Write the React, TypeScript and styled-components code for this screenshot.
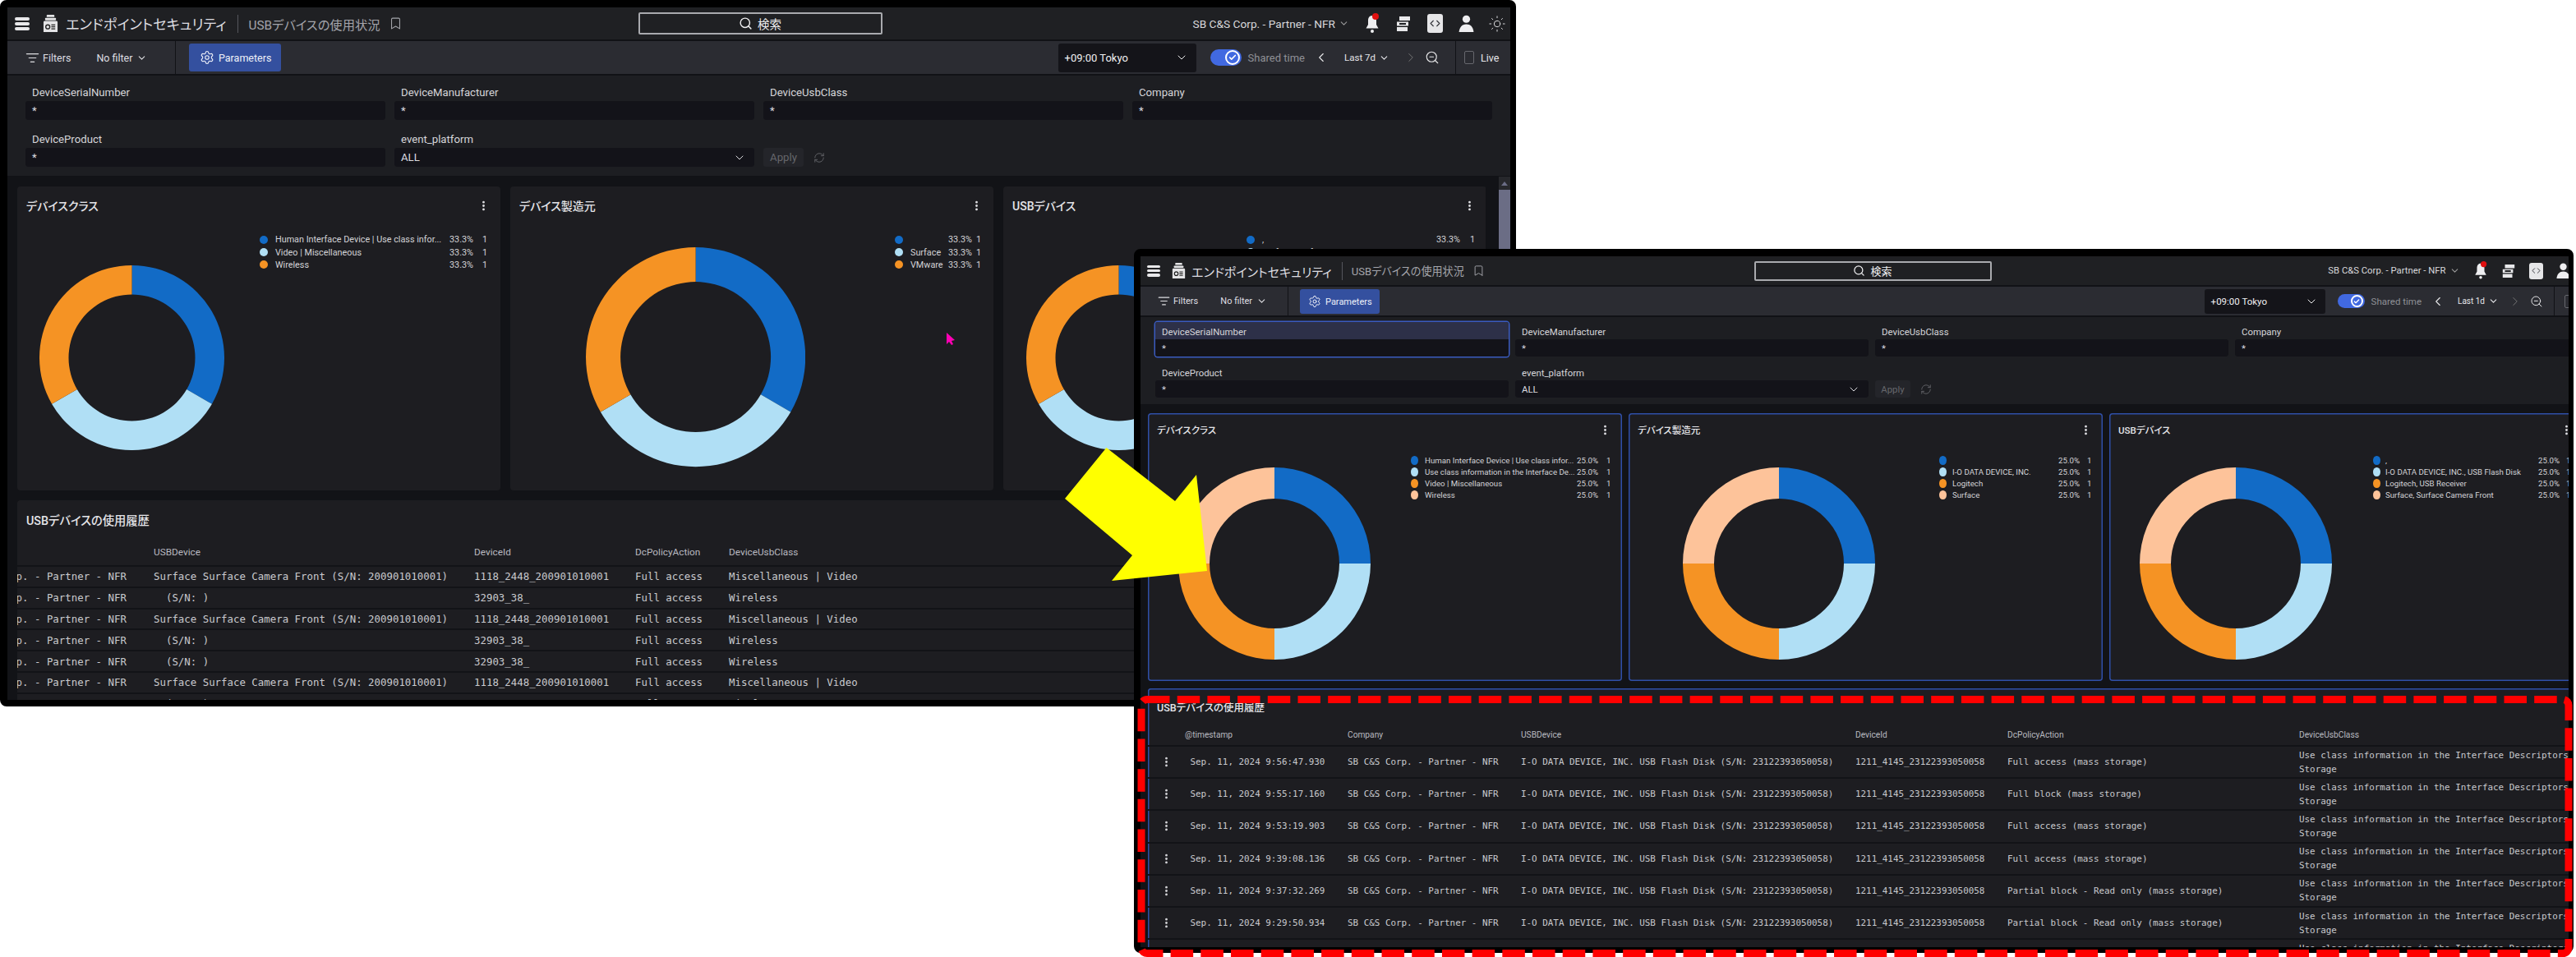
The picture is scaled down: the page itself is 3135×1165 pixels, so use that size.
import React from "react";
import styled, { createGlobalStyle, ThemeProvider } from "styled-components";
import {
  Bookmark,
  Check,
  ChevronDown,
  ChevronLeft,
  ChevronRight,
  Code,
  EllipsisVertical,
  ListFilter,
  RefreshCw,
  Search,
  Settings,
  Sun,
  ZoomOut,
} from "lucide-react";

const SANS = `Roboto, "Noto Sans CJK JP", sans-serif`;
const MONO = `"DejaVu Sans Mono", "Liberation Mono", monospace`;

const BLUE = "#126bc6";
const SKY = "#b0dff5";
const ORANGE = "#f59324";
const PEACH = "#fdc39a";

const large = {
  compact: false,
  left: 0,
  top: 0,
  width: 1845,
  height: 860,
  border: "9px 7px 8px 9px",
  bleed: 0,
  headerH: 41,
  toolbarH: 42,
  titleSize: 17.3,
  subtitleSize: 15.3,
  orgSize: 13.7,
  searchSize: 14.5,
  textSize: 12.5,
  labelSize: 13.2,
  cellSize: 12.4,
  headSize: 11.8,
  legendSize: 10.8,
  cardTitleSize: 14,
  tableTitleSize: 14.3,
  pad: 12,
  gap: 12,
  cardW: 588,
  cardH: 370,
  cardHeadH: 46,
  legendRowH: 15.4,
  accent: "transparent",
  tableTitleH: 47,
  headRowH: 34,
  paramsPad: "14px 21px 11px 22px",
  paramW: 438,
  paramGapX: 11,
  fieldLabelH: 17,
  fieldLabelPad: "0 0 5px 8px",
  fieldH: 23,
  rowGap: 17,
};

const small = {
  ...large,
  compact: true,
  left: 1380,
  top: 303,
  width: 1752,
  height: 857,
  border: "9px 6px 7px 8px",
  bleed: 44,
  headerH: 37,
  toolbarH: 37,
  titleSize: 15.1,
  subtitleSize: 13.1,
  orgSize: 11.3,
  searchSize: 13,
  textSize: 11,
  labelSize: 11.4,
  cellSize: 10.9,
  headSize: 10.2,
  legendSize: 9.7,
  cardTitleSize: 11.5,
  tableTitleSize: 12.5,
  pad: 9,
  gap: 8,
  cardW: 577,
  cardH: 326,
  cardHeadH: 40,
  legendRowH: 13.9,
  accent: "#2f4fa8",
  tableTitleH: 44,
  headRowH: 27,
  paramsPad: "6px 0 8px 18px",
  paramW: 430,
  paramGapX: 8,
  fieldLabelH: 21,
  fieldLabelPad: "3px 0 0 8px",
  fieldH: 21,
  rowGap: 8,
};

const GlobalStyle = createGlobalStyle`
  html, body {
    margin: 0;
    padding: 0;
    background: #fff;
    font-family: ${SANS};
  }
  * {
    box-sizing: border-box;
  }
`;

const Canvas = styled.div`
  position: relative;
  width: 3135px;
  height: 1165px;
  overflow: hidden;
  background: #fff;
  font-feature-settings: "palt";
`;

const Window = styled.section`
  position: absolute;
  left: ${(p) => p.theme.left}px;
  top: ${(p) => p.theme.top}px;
  width: ${(p) => p.theme.width}px;
  height: ${(p) => p.theme.height}px;
  display: flex;
  flex-direction: column;
  overflow: hidden;
  border-style: solid;
  border-color: #000;
  border-width: ${(p) => p.theme.border};
  border-radius: 8px;
  background: #121317;
  color: #e6e6ea;
`;

const Header = styled.header`
  flex: none;
  display: flex;
  align-items: center;
  height: ${(p) => p.theme.headerH}px;
  margin-right: -${(p) => p.theme.bleed}px;
  background: #1f2023;
  border-bottom: 2px solid #111216;
`;

const HeaderSide = styled.div`
  flex: 1 1 0;
  display: flex;
  align-items: center;
  min-width: 0;
`;

const HeaderRight = styled(HeaderSide)`
  justify-content: flex-end;
  white-space: nowrap;
  margin-right: ${(p) => (p.theme.compact ? 0 : -3)}px;
`;

const Burger = styled.div`
  flex: none;
  display: flex;
  flex-direction: column;
  justify-content: space-between;
  width: ${(p) => (p.theme.compact ? 16 : 18)}px;
  height: ${(p) => (p.theme.compact ? 14 : 16)}px;
  margin: ${(p) => (p.theme.compact ? "0 13.5px 0 8px" : "0 15.5px 0 9px")};

  span {
    height: ${(p) => (p.theme.compact ? 3.5 : 4)}px;
    border-radius: 2px;
    background: #e8e8ea;
  }
`;

const AppTitle = styled.h1`
  margin: 0 0 0 ${(p) => (p.theme.compact ? 7.5 : 9.5)}px;
  font-size: ${(p) => p.theme.titleSize}px;
  font-weight: 400;
  white-space: nowrap;
  color: #dcdce0;
`;

const HeaderRule = styled.span`
  flex: none;
  width: 1px;
  height: 22px;
  margin: ${(p) => (p.theme.compact ? "0 11px 0 12px" : "0 13px 0 13px")};
  background: #55565c;
`;

const PageTitle = styled.span`
  font-size: ${(p) => p.theme.subtitleSize}px;
  white-space: nowrap;
  color: #a4a5ab;
  margin-right: 10px;
`;

const SearchBox = styled.div`
  flex: none;
  display: flex;
  align-items: center;
  justify-content: center;
  gap: 6px;
  width: ${(p) => (p.theme.compact ? 289 : 297)}px;
  height: ${(p) => (p.theme.compact ? 24 : 27)}px;
  border: 2px solid #a9aaae;
  border-radius: 2px;
  font-size: ${(p) => p.theme.searchSize}px;
  color: #f0f0f2;
`;

const OrgName = styled.span`
  font-size: ${(p) => p.theme.orgSize}px;
  color: #d8d8dc;
`;

const OrgChevron = styled(ChevronDown)`
  flex: none;
  margin: 0 9px 0 4px;
  color: #999;
`;

const HeaderIcon = styled.span`
  flex: none;
  position: relative;
  display: inline-flex;
  align-items: center;
  justify-content: center;
  width: ${(p) => (p.theme.compact ? 33.5 : 38)}px;
  color: #e8e8ea;
`;

const CodeChip = styled.span`
  display: inline-flex;
  align-items: center;
  justify-content: center;
  width: ${(p) => (p.theme.compact ? 17 : 19)}px;
  height: ${(p) => (p.theme.compact ? 20 : 23)}px;
  border-radius: 3px;
  background: #e6e6e8;
  color: #33343a;
`;

const Toolbar = styled.div`
  flex: none;
  display: flex;
  align-items: stretch;
  height: ${(p) => p.theme.toolbarH}px;
  margin-right: -${(p) => p.theme.bleed}px;
  background: #2b2c32;
  border-bottom: 2px solid #111216;
  font-size: ${(p) => p.theme.textSize}px;
  white-space: nowrap;
`;

const FilterGroup = styled.div`
  flex: none;
  display: flex;
  align-items: center;
  width: ${(p) => (p.theme.compact ? 180 : 205)}px;
  padding-left: ${(p) => (p.theme.compact ? 21 : 22)}px;
  border-right: 1px solid #111216;
  color: #dedee2;
`;

const FilterText = styled.span`
  margin-left: 4px;
  margin-right: ${(p) => (p.theme.compact ? 27 : 31)}px;
`;

const FilterChevron = styled(ChevronDown)`
  flex: none;
  margin-left: 5px;
`;

const ParametersButton = styled.div`
  flex: none;
  display: flex;
  align-items: center;
  gap: 5px;
  width: ${(p) => (p.theme.compact ? 97 : 112)}px;
  margin: 3px 0 ${(p) => (p.theme.compact ? 2 : 3)}px ${(p) => (p.theme.compact ? 14 : 16)}px;
  padding-left: ${(p) => (p.theme.compact ? 10 : 13)}px;
  border-radius: 3px;
  background: #34509f;
  color: #eef0f8;
`;

const ToolbarEnd = styled.div`
  flex: 1;
  display: flex;
  align-items: center;
  justify-content: flex-end;
  min-width: 0;
`;

const ZoneSelect = styled.div`
  flex: none;
  display: flex;
  align-items: center;
  justify-content: space-between;
  width: ${(p) => (p.theme.compact ? 147 : 168)}px;
  height: calc(100% - 5px);
  padding: 0 ${(p) => (p.theme.compact ? 9 : 10)}px 0 8px;
  margin-right: ${(p) => (p.theme.compact ? 15 : 17)}px;
  border-radius: 3px;
  background: #141419;
  color: #f0f0f2;
  font-size: ${(p) => p.theme.textSize + 0.5}px;
`;

const Toggle = styled.span`
  flex: none;
  position: relative;
  width: ${(p) => (p.theme.compact ? 33 : 38)}px;
  height: ${(p) => (p.theme.compact ? 17 : 20)}px;
  margin-right: 8px;
  border-radius: 10px;
  background: #4169e1;
`;

const ToggleKnob = styled.span`
  position: absolute;
  top: 1px;
  right: 2px;
  bottom: 1px;
  aspect-ratio: 1;
  display: flex;
  align-items: center;
  justify-content: center;
  border: 2px solid #fff;
  border-radius: 50%;
  background: #4169e1;
  color: #fff;
`;

const Muted = styled.span`
  font-size: ${(p) => p.theme.textSize + 0.5}px;
  color: #8f9096;
`;

const RangeStep = styled.span`
  flex: none;
  display: inline-flex;
  justify-content: center;
  width: ${(p) => (p.$wide ? 40 : 26)}px;
  color: ${(p) => (p.$dim ? "#777" : "#e8e8ea")};
`;

const RangeLabel = styled.span`
  display: inline-flex;
  align-items: center;
  gap: 4px;
  width: ${(p) => (p.theme.compact ? 57 : 68)}px;
  margin-left: ${(p) => (p.theme.compact ? 4 : 8)}px;
  font-size: ${(p) => p.theme.textSize - 1}px;
`;

const LiveGroup = styled.div`
  flex: none;
  display: flex;
  align-items: center;
  gap: 8px;
  align-self: stretch;
  width: ${(p) => (p.theme.compact ? 62 : 67)}px;
  margin-left: ${(p) => (p.theme.compact ? 8 : 15)}px;
  padding-left: ${(p) => (p.theme.compact ? 12 : 10)}px;
  border-left: 1px solid #111216;
`;

const CheckBox = styled.span`
  flex: none;
  width: 12px;
  height: 16px;
  border: 1px solid #66676d;
  border-radius: 2px;
`;

const Params = styled.div`
  flex: none;
  display: flex;
  flex-direction: column;
  gap: ${(p) => p.theme.rowGap}px;
  padding: ${(p) => p.theme.paramsPad};
  background: #1d1e22;
  border-bottom: 1px solid #111216;
  font-size: ${(p) => p.theme.labelSize}px;
`;

const ParamRow = styled.div`
  display: flex;
  align-items: flex-end;
  gap: ${(p) => p.theme.paramGapX}px;
`;

const Field = styled.div`
  flex: none;
  width: ${(p) => p.theme.paramW}px;
  border-radius: 3px;
  box-shadow: ${(p) => (p.$focused ? "0 0 0 1.5px #3a5bbf" : "none")};
  overflow: hidden;
`;

const FieldLabel = styled.div`
  display: flex;
  align-items: center;
  height: ${(p) => p.theme.fieldLabelH}px;
  padding: ${(p) => p.theme.fieldLabelPad};
  white-space: nowrap;
  color: #d6d6da;
  background: ${(p) => (p.$focused ? "#2d3048" : "transparent")};
`;

const FieldInput = styled.div`
  display: flex;
  align-items: center;
  justify-content: space-between;
  height: ${(p) => p.theme.fieldH}px;
  padding: 0 10px 0 8px;
  border-radius: ${(p) => (p.$focused ? 0 : 3)}px;
  background: #131319;
  color: #dcdce0;
`;

const ApplyButton = styled.div`
  display: flex;
  align-items: center;
  justify-content: center;
  width: ${(p) => (p.theme.compact ? 43 : 49)}px;
  height: ${(p) => p.theme.fieldH}px;
  border-radius: 3px;
  background: #24252a;
  color: #66676c;
`;

const ApplyGroup = styled.div`
  display: flex;
  align-items: center;
  gap: 12px;
  color: #66676c;
`;

const Body = styled.div`
  flex: 1;
  display: flex;
  min-height: 0;
`;

const Content = styled.main`
  flex: 1;
  min-width: 0;
  display: flex;
  flex-direction: column;
  gap: ${(p) => p.theme.gap + (p.theme.compact ? 1 : 0)}px;
  padding: ${(p) => (p.theme.compact ? 10 : 12)}px 0 0 ${(p) => p.theme.pad}px;
  overflow: hidden;
`;

const ChartRow = styled.div`
  flex: none;
  display: flex;
  gap: ${(p) => p.theme.gap}px;
`;

const Card = styled.article`
  flex: none;
  width: ${(p) => p.theme.cardW}px;
  height: ${(p) => p.theme.cardH}px;
  display: flex;
  flex-direction: column;
  border-radius: 4px;
  background: #1d1d21;
  box-shadow: inset 0 0 0 1.5px ${(p) => p.theme.accent};
`;

const CardHead = styled.div`
  flex: none;
  display: flex;
  align-items: center;
  justify-content: space-between;
  height: ${(p) => p.theme.cardHeadH}px;
  padding: 0 13px 0 11px;
`;

const CardTitle = styled.h2`
  margin: 0;
  font-size: ${(p) => p.theme.cardTitleSize}px;
  font-weight: 500;
  color: #e4e4e8;
`;

const CardBody = styled.div`
  flex: 1;
  display: flex;
  align-items: flex-start;
  min-height: 0;
`;

const ChartSlot = styled.div`
  flex: none;
  align-self: center;
  display: flex;
  width: ${(p) => p.$width}px;
  padding-left: ${(p) => p.$inset}px;
`;

const Legend = styled.ul`
  margin: 11px 0 0;
  padding: 0;
  list-style: none;
  font-size: ${(p) => p.theme.legendSize}px;
  color: #d4d4d8;
`;

const LegendRow = styled.li`
  display: grid;
  grid-template-columns: ${(p) => p.$cols};
  align-items: center;
  height: ${(p) => p.theme.legendRowH}px;
  white-space: nowrap;
`;

const LegendDot = styled.span`
  width: ${(p) => (p.theme.compact ? 8.5 : 10)}px;
  height: ${(p) => (p.theme.compact ? 11 : 10)}px;
  border-radius: 50%;
  background: ${(p) => p.$color};
`;

const TableCard = styled.article`
  flex: 1;
  min-height: 0;
  width: ${(p) => (p.theme.compact ? 1800 : 1788)}px;
  border-radius: 4px 4px 0 0;
  background: #1d1d21;
  box-shadow: inset 0 1.5px 0 ${(p) => p.theme.accent}, inset 1.5px 0 0 ${(p) => p.theme.accent};
  overflow: hidden;
`;

const TableTitle = styled.h2`
  display: flex;
  align-items: center;
  height: ${(p) => p.theme.tableTitleH}px;
  margin: 0;
  padding-left: 11px;
  font-size: ${(p) => p.theme.tableTitleSize}px;
  font-weight: 500;
  color: #e4e4e8;
`;

const Table = styled.div`
  margin-left: ${(p) => p.$offset}px;
  width: calc(100% - ${(p) => p.$offset}px);
`;

const TableRow = styled.div`
  display: grid;
  grid-template-columns: ${(p) => p.$cols};
  align-items: center;
  height: ${(p) => p.$height}px;
  border-bottom: 2px solid #121317;
`;

const HeadCell = styled.div`
  font-size: ${(p) => p.theme.headSize}px;
  white-space: nowrap;
  color: #b9bac0;
`;

const Cell = styled.div`
  font-family: ${MONO};
  font-size: ${(p) => p.theme.cellSize}px;
  line-height: 17px;
  white-space: pre;
  color: #c9cace;
  padding-left: ${(p) => p.$inset ?? 0}px;
`;

const RowMenu = styled.div`
  display: flex;
  justify-content: center;
  color: #d8d8dc;
`;

const Scrollbar = styled.div`
  flex: none;
  width: 14px;
  margin-left: 16px;
  display: flex;
  flex-direction: column;
  background: #27282c;
`;

const ScrollArrow = styled.span`
  flex: none;
  width: 0;
  height: 0;
  margin: 6px auto 5px;
  border-left: 4px solid transparent;
  border-right: 4px solid transparent;
  border-bottom: 5px solid #6b6d85;
`;

const ScrollThumb = styled.div`
  height: 560px;
  background: #6b6d85;
`;

const Annotation = styled.svg`
  position: absolute;
  left: 0;
  top: 0;
  pointer-events: none;
`;

function sector(r: number, inner: number, from: number, to: number) {
  const pt = (radius: number, turn: number) => {
    const a = turn * 2 * Math.PI;
    return `${(radius * Math.sin(a)).toFixed(2)} ${(-radius * Math.cos(a)).toFixed(2)}`;
  };
  return [
    `M${pt(r, from)}`,
    `A${r} ${r} 0 0 1 ${pt(r, to)}`,
    `L${pt(inner, to)}`,
    `A${inner} ${inner} 0 0 0 ${pt(inner, from)}`,
    "Z",
  ].join(" ");
}

function Donut({ r, inner, colors }: { r: number; inner: number; colors: string[] }) {
  const part = 1 / colors.length;
  return (
    <svg width={r * 2} height={r * 2} viewBox={`${-r} ${-r} ${r * 2} ${r * 2}`}>
      {colors.map((c, i) => (
        <path key={c} d={sector(r, inner, part * i, part * (i + 1))} fill={c} />
      ))}
    </svg>
  );
}

function Chart({
  title,
  items,
  percent,
  r,
  inner,
  slot,
  inset,
  cols,
}: {
  title: string;
  items: string[];
  percent: string;
  r: number;
  inner: number;
  slot: number;
  inset: number;
  cols: string;
}) {
  const colors = [BLUE, SKY, ORANGE, PEACH].slice(0, items.length);
  return (
    <Card>
      <CardHead>
        <CardTitle>{title}</CardTitle>
        <EllipsisVertical size={15} strokeWidth={2.5} color="#e4e4e8" />
      </CardHead>
      <CardBody>
        <ChartSlot $width={slot} $inset={inset}>
          <Donut r={r} inner={inner} colors={colors} />
        </ChartSlot>
        <Legend>
          {items.map((item, i) => (
            <LegendRow key={i} $cols={cols}>
              <LegendDot $color={colors[i]} />
              <span>{item}</span>
              <span>{percent}</span>
              <span>1</span>
            </LegendRow>
          ))}
        </Legend>
      </CardBody>
    </Card>
  );
}

function AppIcon({ size }: { size: number }) {
  return (
    <svg width={size} height={size * 1.15} viewBox="0 0 20 23" fill="#e4e4e6">
      <rect x="5" y="0" width="10" height="3" rx="1" />
      <rect x="3" y="4" width="14" height="3" rx="1" />
      <rect x="1" y="8" width="18" height="15" rx="1.5" />
      <circle cx="6.5" cy="15.5" r="2.6" fill="none" stroke="#222" strokeWidth="1.4" />
      <path d="M11 13h5M11 15.5h5M11 18h5" stroke="#222" strokeWidth="1.3" />
    </svg>
  );
}

function BellIcon({ size }: { size: number }) {
  return (
    <svg width={size} height={size * 1.25} viewBox="0 0 20 25">
      <path d="M10 3c-3.6 0-5 3-5 6v5l-2.5 4.5h15L15 14V9c0-3-1.4-6-5-6z" fill="#eeeef0" />
      <circle cx="10" cy="22" r="2" fill="#eeeef0" />
      <circle cx="14" cy="4" r="4" fill="#e01010" />
    </svg>
  );
}

function PanelsIcon({ size }: { size: number }) {
  return (
    <svg width={size} height={size} viewBox="0 0 20 20" fill="#e8e8ea">
      <path d="M5 1h13v5H5zM2 7.5h14v5H2zM2 14h13v5H2z" />
      <path d="M5 9h8v2H5z" fill="#1f2023" />
    </svg>
  );
}

function UserIcon({ size }: { size: number }) {
  return (
    <svg width={size} height={size} viewBox="0 0 20 20" fill="#eeeef0">
      <circle cx="10" cy="5" r="4.4" />
      <path d="M1.5 20c.6-6 3.8-9 8.5-9s7.9 3 8.5 9z" />
    </svg>
  );
}

const CLASS_TEXT = "Use class information in the Interface Descriptors | Mass\nStorage";
const COMPANY = "SB C&S Corp. - Partner - NFR";
const CAMERA = "Surface Surface Camera Front (S/N: 200901010001)";
const FLASH = "I-O DATA DEVICE, INC. USB Flash Disk (S/N: 23122393050058)";
const FLASH_ID = "1211_4145_23122393050058";

const firstRows = [
  [CAMERA, "1118_2448_200901010001", "Full access", "Miscellaneous | Video"],
  ["  (S/N: )", "32903_38_", "Full access", "Wireless"],
  [CAMERA, "1118_2448_200901010001", "Full access", "Miscellaneous | Video"],
  ["  (S/N: )", "32903_38_", "Full access", "Wireless"],
  ["  (S/N: )", "32903_38_", "Full access", "Wireless"],
  [CAMERA, "1118_2448_200901010001", "Full access", "Miscellaneous | Video"],
  ["  (S/N: )", "32903_38_", "Full access", "Wireless"],
];

const secondRows = [
  ["Sep. 11, 2024 9:56:47.930", "Full access (mass storage)"],
  ["Sep. 11, 2024 9:55:17.160", "Full block (mass storage)"],
  ["Sep. 11, 2024 9:53:19.903", "Full access (mass storage)"],
  ["Sep. 11, 2024 9:39:08.136", "Full access (mass storage)"],
  ["Sep. 11, 2024 9:37:32.269", "Partial block - Read only (mass storage)"],
  ["Sep. 11, 2024 9:29:50.934", "Partial block - Read only (mass storage)"],
  ["Sep. 11, 2024 9:20:11.402", "Partial block - Read only (mass storage)"],
];

function Chrome({ range, focused }: { range: string; focused?: boolean }) {
  const compact = focused === true;
  const icon = compact ? 15 : 17;
  return (
    <>
      <Header>
        <HeaderSide>
          <Burger>
            <span />
            <span />
            <span />
          </Burger>
          <AppIcon size={compact ? 17 : 19} />
          <AppTitle>エンドポイントセキュリティ</AppTitle>
          <HeaderRule />
          <PageTitle>USBデバイスの使用状況</PageTitle>
          <Bookmark size={icon} strokeWidth={1.5} color="#a4a5ab" />
        </HeaderSide>
        <SearchBox>
          <Search size={icon} strokeWidth={2} />
          検索
        </SearchBox>
        <HeaderRight>
          <OrgName>SB C&amp;S Corp. - Partner - NFR</OrgName>
          <OrgChevron size={13} />
          <HeaderIcon>
            <BellIcon size={compact ? 18 : 20} />
          </HeaderIcon>
          <HeaderIcon>
            <PanelsIcon size={compact ? 18 : 20} />
          </HeaderIcon>
          <HeaderIcon>
            <CodeChip>
              <Code size={compact ? 11 : 13} />
            </CodeChip>
          </HeaderIcon>
          <HeaderIcon>
            <UserIcon size={compact ? 19 : 21} />
          </HeaderIcon>
          <HeaderIcon>
            <Sun size={22} strokeWidth={1} />
          </HeaderIcon>
        </HeaderRight>
      </Header>
      <Toolbar>
        <FilterGroup>
          <ListFilter size={icon} strokeWidth={1.75} />
          <FilterText>Filters</FilterText>
          No filter
          <FilterChevron size={13} />
        </FilterGroup>
        <ParametersButton>
          <Settings size={icon + 1} strokeWidth={1.5} />
          Parameters
        </ParametersButton>
        <ToolbarEnd>
          <ZoneSelect>
            +09:00 Tokyo
            <ChevronDown size={16} strokeWidth={1.5} />
          </ZoneSelect>
          <Toggle>
            <ToggleKnob>
              <Check size={compact ? 8 : 10} strokeWidth={4} />
            </ToggleKnob>
          </Toggle>
          <Muted>Shared time</Muted>
          <RangeStep $wide>
            <ChevronLeft size={18} strokeWidth={1.5} />
          </RangeStep>
          <RangeLabel>
            {range}
            <ChevronDown size={13} />
          </RangeLabel>
          <RangeStep $dim>
            <ChevronRight size={18} strokeWidth={1.25} />
          </RangeStep>
          <RangeStep>
            <ZoomOut size={icon + 1} strokeWidth={1.5} />
          </RangeStep>
          <LiveGroup>
            <CheckBox />
            Live
          </LiveGroup>
        </ToolbarEnd>
      </Toolbar>
      <Params>
        <ParamRow>
          <Field $focused={focused}>
            <FieldLabel $focused={focused}>DeviceSerialNumber</FieldLabel>
            <FieldInput $focused={focused}>*</FieldInput>
          </Field>
          <Field>
            <FieldLabel>DeviceManufacturer</FieldLabel>
            <FieldInput>*</FieldInput>
          </Field>
          <Field>
            <FieldLabel>DeviceUsbClass</FieldLabel>
            <FieldInput>*</FieldInput>
          </Field>
          <Field>
            <FieldLabel>Company</FieldLabel>
            <FieldInput>*</FieldInput>
          </Field>
        </ParamRow>
        <ParamRow>
          <Field>
            <FieldLabel>DeviceProduct</FieldLabel>
            <FieldInput>*</FieldInput>
          </Field>
          <Field>
            <FieldLabel>event_platform</FieldLabel>
            <FieldInput>
              ALL
              <ChevronDown size={16} strokeWidth={1.5} />
            </FieldInput>
          </Field>
          <ApplyGroup>
            <ApplyButton>Apply</ApplyButton>
            <RefreshCw size={14} strokeWidth={1.5} />
          </ApplyGroup>
        </ParamRow>
      </Params>
    </>
  );
}

function FirstWindow() {
  const cols = "242px 390px 196px 114px 1fr";
  const height = 25.8;
  return (
    <ThemeProvider theme={large}>
      <Window>
        <Chrome range="Last 7d" />
        <Body>
          <Content>
            <ChartRow>
              <Chart
                title="デバイスクラス"
                items={["Human Interface Device | Use class infor...", "Video | Miscellaneous", "Wireless"]}
                percent="33.3%"
                r={112.5}
                inner={77}
                slot={295}
                inset={27}
                cols="19px 212px 40px 10px"
              />
              <Chart
                title="デバイス製造元"
                items={["", "Surface", "VMware"]}
                percent="33.3%"
                r={133.6}
                inner={91.5}
                slot={468}
                inset={92}
                cols="19px 46px 34px 10px"
              />
              <Chart
                title="USBデバイス"
                items={[",", "Surface, Surface Camera Front", "Wireless"]}
                percent="33.3%"
                r={112.5}
                inner={77}
                slot={296}
                inset={28}
                cols="19px 212px 41px 10px"
              />
            </ChartRow>
            <TableCard>
              <TableTitle>USBデバイスの使用履歴</TableTitle>
              <Table $offset={-76}>
                <TableRow $cols={cols} $height={large.headRowH}>
                  <HeadCell>Company</HeadCell>
                  <HeadCell>USBDevice</HeadCell>
                  <HeadCell>DeviceId</HeadCell>
                  <HeadCell>DcPolicyAction</HeadCell>
                  <HeadCell>DeviceUsbClass</HeadCell>
                </TableRow>
                {firstRows.map((row, i) => (
                  <TableRow key={i} $cols={cols} $height={height}>
                    <Cell>{COMPANY}</Cell>
                    {row.map((value, j) => (
                      <Cell key={j}>{value}</Cell>
                    ))}
                  </TableRow>
                ))}
              </Table>
            </TableCard>
          </Content>
          <Scrollbar>
            <ScrollArrow />
            <ScrollThumb />
          </Scrollbar>
        </Body>
      </Window>
    </ThemeProvider>
  );
}

function SecondWindow() {
  const cols = "45px 198px 211px 407px 185px 355px 1fr";
  const height = 39.2;
  return (
    <ThemeProvider theme={small}>
      <Window>
        <Chrome range="Last 1d" focused />
        <Body>
          <Content>
            <ChartRow>
              <Chart
                title="デバイスクラス"
                items={[
                  "Human Interface Device | Use class infor...",
                  "Use class information in the Interface De...",
                  "Video | Miscellaneous",
                  "Wireless",
                ]}
                percent="25.0%"
                r={117}
                inner={79}
                slot={320}
                inset={37}
                cols="17px 185px 36px 10px"
              />
              <Chart
                title="デバイス製造元"
                items={["", "I-O DATA DEVICE, INC.", "Logitech", "Surface"]}
                percent="25.0%"
                r={117}
                inner={79}
                slot={378}
                inset={66}
                cols="16px 129px 35px 10px"
              />
              <Chart
                title="USBデバイス"
                items={[",", "I-O DATA DEVICE, INC., USB Flash Disk", "Logitech, USB Receiver", "Surface, Surface Camera Front"]}
                percent="25.0%"
                r={117}
                inner={79}
                slot={321}
                inset={37}
                cols="15px 186px 34px 10px"
              />
            </ChartRow>
            <TableCard>
              <TableTitle>USBデバイスの使用履歴</TableTitle>
              <Table $offset={0}>
                <TableRow $cols={cols} $height={small.headRowH}>
                  <span />
                  <HeadCell>@timestamp</HeadCell>
                  <HeadCell>Company</HeadCell>
                  <HeadCell>USBDevice</HeadCell>
                  <HeadCell>DeviceId</HeadCell>
                  <HeadCell>DcPolicyAction</HeadCell>
                  <HeadCell>DeviceUsbClass</HeadCell>
                </TableRow>
                {secondRows.map((row) => (
                  <TableRow key={row[0]} $cols={cols} $height={height}>
                    <RowMenu>
                      <EllipsisVertical size={15} strokeWidth={2.5} />
                    </RowMenu>
                    <Cell $inset={6.5}>{row[0]}</Cell>
                    <Cell>{COMPANY}</Cell>
                    <Cell>{FLASH}</Cell>
                    <Cell>{FLASH_ID}</Cell>
                    <Cell>{row[1]}</Cell>
                    <Cell>{CLASS_TEXT}</Cell>
                  </TableRow>
                ))}
              </Table>
            </TableCard>
          </Content>
        </Body>
      </Window>
    </ThemeProvider>
  );
}

export default function App() {
  return (
    <Canvas>
      <GlobalStyle />
      <FirstWindow />
      <SecondWindow />
      <Annotation width={3135} height={1165} viewBox="0 0 3135 1165">
        <polygon
          points="1346.5,545 1430,610 1456,578 1469,695 1353,707 1378,676 1296,607"
          fill="#ffff00"
        />
        <rect
          x="1389"
          y="851.5"
          width="1737"
          height="309"
          rx="7"
          fill="none"
          stroke="#ff0000"
          strokeWidth="9"
          strokeDasharray="27.5 9.2"
        />
        <path d="M1152 405l0 14 3-3 3 4 2-1-2-4 4-1z" fill="#ff00b4" />
      </Annotation>
    </Canvas>
  );
}
